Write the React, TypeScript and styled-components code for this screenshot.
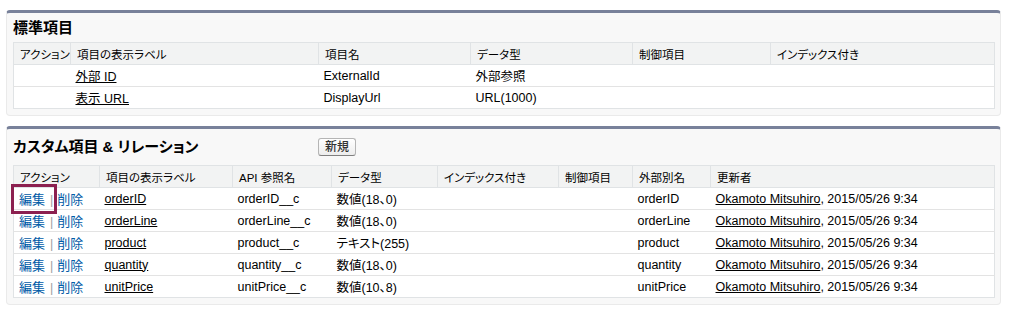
import styled, { createGlobalStyle } from "styled-components";

const GlobalStyle = createGlobalStyle`
    html, body {
        margin: 0;
        padding: 0;
        background: #ffffff;
    }
    body {
        font-family: "Liberation Sans", "Noto Sans CJK JP", sans-serif;
        font-feature-settings: "palt";
        color: #000;
    }
`;

const Page = styled.div`
    padding: 10px 0 0 6px;
    width: 995px;
    display: flex;
    flex-direction: column;
    gap: 10px;
    position: relative;
`;
const Block = styled.section`
    background-color: #f8f8f8;
    border: 1px solid #eaeaea;
    border-top: 3px solid #78819a;
    border-radius: 4px;
    padding: 0 6px 6px 6px;
`;
const BlockHeader = styled.div<{ $height: number }>`
    height: ${(props) => props.$height}px;
    display: flex;
    align-items: center;
`;
const Title = styled.h2<{ $width?: number }>`
    margin: 0;
    width: ${(props) => (props.$width ? props.$width + "px" : "auto")};
    font-size: 15px;
    font-weight: 700;
    line-height: 18px;
    color: #000;
`;
const Button = styled.button`
    height: 18px;
    padding: 0 6px;
    font-family: inherit;
    font-size: 12px;
    font-weight: 500;
    line-height: 16px;
    color: #333;
    border: 1px solid #b5b5b5;
    border-bottom-color: #7f7f7f;
    border-radius: 3px;
    background: linear-gradient(#ffffff, #ededed);
    cursor: pointer;
`;
const Table = styled.table`
    width: 100%;
    table-layout: fixed;
    border-collapse: collapse;
    background-color: #ffffff;
    border: 1px solid #e0e3e5;
`;
const HeadCell = styled.th`
    height: 21px;
    padding: 0 5px 0 6px;
    background-color: #f2f3f3;
    border: 1px solid #e0e3e5;
    font-size: 11.5px;
    font-weight: 400;
    text-align: left;
    white-space: nowrap;
    overflow: hidden;
`;
const Cell = styled.td`
    height: 21px;
    padding: 0 5px;
    border-top: 1px solid #e3e3e3;
    font-size: 12.5px;
    white-space: nowrap;
    overflow: hidden;
`;
const Label = styled.a`
    color: #000;
    text-decoration: underline;
    cursor: pointer;
`;
const Action = styled.a`
    color: #015ba7;
    text-decoration: none;
    font-size: 13px;
    cursor: pointer;
`;
const Sep = styled.span`
    color: #a0a0a0;
    margin: 0 4px 0 5px;
`;
const Highlight = styled.div`
    position: absolute;
    left: 11px;
    top: 184px;
    width: 40px;
    height: 24px;
    border: 3px solid #8c2050;
    pointer-events: none;
`;

const stdCols = [57, 248, 152, 162, 138, 224];
const stdHeads = ["アクション", "項目の表示ラベル", "項目名", "データ型", "制御項目", "インデックス付き"];
const stdRows = [
    { label: "外部 ID", name: "ExternalId", type: "外部参照" },
    { label: "表示 URL", name: "DisplayUrl", type: "URL(1000)" },
];

const customCols = [86, 133, 99, 106, 121, 74, 78, 284];
const customHeads = ["アクション", "項目の表示ラベル", "API 参照名", "データ型", "インデックス付き", "制御項目", "外部別名", "更新者"];
const customRows = [
    { label: "orderID", api: "orderID__c", type: "数値(18、0)" },
    { label: "orderLine", api: "orderLine__c", type: "数値(18、0)" },
    { label: "product", api: "product__c", type: "テキスト(255)" },
    { label: "quantity", api: "quantity__c", type: "数値(18、0)" },
    { label: "unitPrice", api: "unitPrice__c", type: "数値(10、8)" },
];

export default function App() {
    return (
        <>
            <GlobalStyle />
            <Page>
                <Block>
                    <BlockHeader $height={29}>
                        <Title>標準項目</Title>
                    </BlockHeader>
                    <Table>
                        <colgroup>
                            {stdCols.map((w, i) => (
                                <col key={i} style={{ width: w }} />
                            ))}
                        </colgroup>
                        <thead>
                            <tr>
                                {stdHeads.map((h) => (
                                    <HeadCell key={h}>{h}</HeadCell>
                                ))}
                            </tr>
                        </thead>
                        <tbody>
                            {stdRows.map((r) => (
                                <tr key={r.name}>
                                    <Cell />
                                    <Cell>
                                        <Label>{r.label}</Label>
                                    </Cell>
                                    <Cell>{r.name}</Cell>
                                    <Cell>{r.type}</Cell>
                                    <Cell />
                                    <Cell />
                                </tr>
                            ))}
                        </tbody>
                    </Table>
                </Block>
                <Block>
                    <BlockHeader $height={36}>
                        <Title $width={305}>カスタム項目 &amp; リレーション</Title>
                        <Button>新規</Button>
                    </BlockHeader>
                    <Table>
                        <colgroup>
                            {customCols.map((w, i) => (
                                <col key={i} style={{ width: w }} />
                            ))}
                        </colgroup>
                        <thead>
                            <tr>
                                {customHeads.map((h) => (
                                    <HeadCell key={h}>{h}</HeadCell>
                                ))}
                            </tr>
                        </thead>
                        <tbody>
                            {customRows.map((r) => (
                                <tr key={r.api}>
                                    <Cell>
                                        <Action>編集</Action>
                                        <Sep>|</Sep>
                                        <Action>削除</Action>
                                    </Cell>
                                    <Cell>
                                        <Label>{r.label}</Label>
                                    </Cell>
                                    <Cell>{r.api}</Cell>
                                    <Cell>{r.type}</Cell>
                                    <Cell />
                                    <Cell />
                                    <Cell>{r.label}</Cell>
                                    <Cell>
                                        <Label>Okamoto Mitsuhiro</Label>, 2015/05/26 9:34
                                    </Cell>
                                </tr>
                            ))}
                        </tbody>
                    </Table>
                </Block>
                <Highlight />
            </Page>
        </>
    );
}
